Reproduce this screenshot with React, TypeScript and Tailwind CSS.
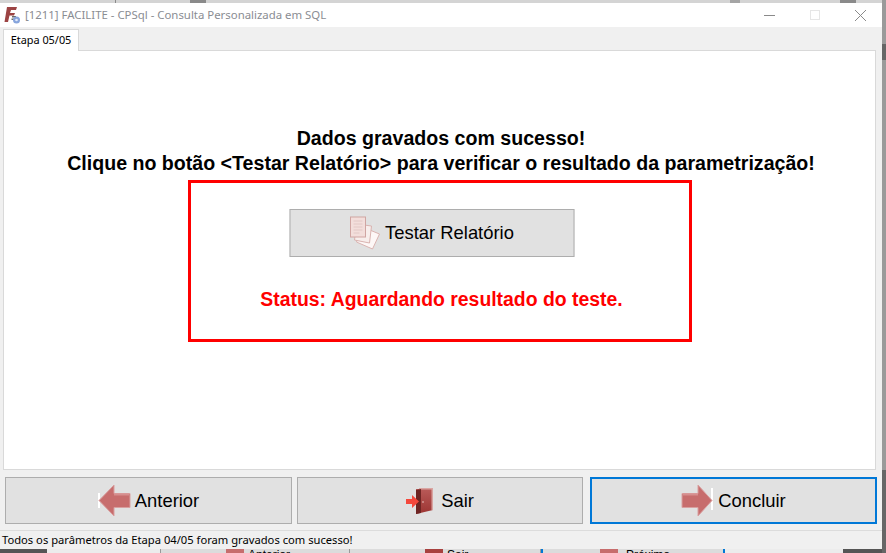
// Etapa 05/05 window of the CPSql report wizard
import type { ReactNode } from 'react';

function AppIcon() {
  return (
    <svg width="18" height="18" viewBox="0 0 18 18">
      <path d="M4 1h10l-1 3H8L7 7h5l-1 2.500H6.500L5 16H1.500z" fill="#9c4343" />
      <path d="M9 10h4v1.500H9zM8.500 12.500h2.500V14H8.500z" fill="#6a6a6a" />
      <circle cx="13.500" cy="14" r="3.500" fill="#86a4dc" />
      <circle cx="13.500" cy="14" r="1.300" fill="#e3ebf9" />
    </svg>
  );
}

function LeftArrow() {
  return (
    <svg width="33" height="33" viewBox="0 0 33 33">
      <path d="M0 9h2v15H0z" fill="#ffffff" />
      <path d="M1 16.500 16 1v8.500h16v14H16V32z" fill="#c76d6d" stroke="#d9a0a0" strokeWidth="1" />
      <path d="M16 9.500h15v2H16z" fill="#d68f8f" />
    </svg>
  );
}

function RightArrow() {
  return (
    <svg width="33" height="33" viewBox="0 0 33 33">
      <path d="M30 4h2v22h-2z" fill="#ffffff" />
      <path d="M31 16.500 17 1v8.500H1v14h16V32z" fill="#c76d6d" stroke="#d9a0a0" strokeWidth="1" />
      <path d="M2 9.500h15v2H2z" fill="#d68f8f" />
    </svg>
  );
}

function DoorIcon() {
  return (
    <svg width="31" height="28" viewBox="0 0 31 28">
      <defs>
        <linearGradient id="door" x1="0" y1="0" x2="0" y2="1">
          <stop offset="0" stopColor="#b95a58" />
          <stop offset="1" stopColor="#9c3432" />
        </linearGradient>
      </defs>
      <path d="M10 2h17v21l-17 4z" fill="url(#door)" />
      <path d="M13 1h14v22h-1.500V2.500H13z" fill="#d9a5a2" />
      <path d="M10 3l5-1v24l-5 1z" fill="#6e2523" />
      <path d="M0 12h6V8l7 6.500-7 6.500v-4H0z" fill="#f4483c" />
      <circle cx="17" cy="15" r="0.800" fill="#f0d0c8" />
    </svg>
  );
}

function DocsIcon() {
  return (
    <svg width="32" height="34" viewBox="0 0 32 34">
      <path d="M13 11l17 7-7 15-16-7z" fill="#fdf7f6" stroke="#d9b3b0" />
      <path d="M7 8l15 2-2 17-15-3z" fill="#f8eeec" stroke="#d9b3b0" />
      <rect x="1" y="1" width="15" height="20" fill="#f3dedb" stroke="#d0a5a2" />
      <path d="M4 5h9M4 8h9M4 11h9M4 14h9M4 17h6" stroke="#e2c8c5" />
    </svg>
  );
}

function NavButton({ icon, label, className }: { icon: ReactNode; label: string; className: string }) {
  return (
    <button
      className={`flex h-[47px] items-center justify-center gap-[4px] bg-[#e1e1e1] text-[18.4px] text-black ${className}`}
    >
      {icon}
      <span>{label}</span>
    </button>
  );
}

export default function App() {
  return (
    <div className="flex h-[553px] w-[886px] overflow-hidden font-['Liberation_Sans',sans-serif]">
      <div className="flex w-[882px] flex-col">
        {/* window behind, top edge */}
        <div className="flex h-[3px] shrink-0 bg-[#d4d4d4]">
          <div className="ml-[115px] w-px bg-[#8a8a8a]" />
          <div className="ml-[74px] w-[16px] bg-[#8a8a8a]" />
          <div className="ml-[524px] w-[10px] bg-[#a5a5a5]" />
          <div className="ml-[100px] w-[16px] bg-[#8a8a8a]" />
        </div>

        {/* title bar */}
        <div className="flex h-[24px] shrink-0 items-center bg-white pl-[3px]">
          <AppIcon />
          <span className="ml-[4px] font-['Noto_Sans',sans-serif] text-[11.4px] text-[#8a8d93]">
            [1211] FACILITE - CPSql - Consulta Personalizada em SQL
          </span>
          <div className="ml-auto flex items-center gap-[35px] pr-[16px]">
            <div className="h-px w-[11px] bg-[#8a8a8a]" />
            <div className="size-[10px] border border-[#e6e6e6]" />
            <svg width="11" height="11" viewBox="0 0 11 11">
              <path d="M0 0l11 11M11 0L0 11" stroke="#8a8a8a" />
            </svg>
          </div>
        </div>

        <div className="flex min-h-0 flex-1 flex-col bg-[#f0f0f0]">
          {/* tab */}
          <div className="-mb-px flex h-[24px] shrink-0 items-end pl-[3px]">
            <div className="relative z-10 flex h-[22px] w-[76px] items-center justify-center border border-b-0 border-[#d9d9d9] bg-white font-['Noto_Sans',sans-serif] text-[10.9px] text-black">
              Etapa 05/05
            </div>
          </div>

          {/* panel */}
          <div className="ml-[3px] flex h-[420px] w-[873px] shrink-0 flex-col items-center border border-[#d9d9d9] bg-white pt-[75px]">
            <p className="pl-[3px] text-center text-[19.6px] font-bold leading-[25px] whitespace-nowrap text-black">
              Dados gravados com sucesso!
              <br />
              Clique no botão &lt;Testar Relatório&gt; para verificar o resultado da parametrização!
            </p>
            <div className="mt-[4px] ml-px flex h-[162px] w-[504px] flex-col items-center border-[3px] border-[#ff0000] pt-[26px]">
              <button className="flex h-[48px] w-[285px] -translate-x-[8.5px] items-center justify-center gap-[4px] border border-[#adadad] bg-[#e1e1e1] text-[18.4px] text-black">
                <DocsIcon />
                <span>Testar Relatório</span>
              </button>
              <p className="mt-[31px] pl-[3px] text-[19.4px] font-bold leading-[22px] whitespace-nowrap text-[#ff0000]">
                Status: Aguardando resultado do teste.
              </p>
            </div>
          </div>

          {/* nav buttons */}
          <div className="mt-[7px] flex pl-[5px]">
            <NavButton icon={<LeftArrow />} label="Anterior" className="w-[287px] border border-[#adadad]" />
            <NavButton icon={<DoorIcon />} label="Sair" className="ml-[5px] w-[286px] border border-[#adadad]" />
            <NavButton icon={<RightArrow />} label="Concluir" className="ml-[7px] w-[287px] border-2 border-[#0078d7]" />
          </div>

          {/* status bar */}
          <div className="mt-[6px] flex min-h-0 flex-1 items-center border-t border-[#dcdcdc] pl-[2px] font-['Noto_Sans',sans-serif] text-[11.2px] text-black">
            Todos os parâmetros da Etapa 04/05 foram gravados com sucesso!
          </div>
        </div>

        {/* window behind, cut off by the bottom of the shot */}
        <div className="flex h-[4px] shrink-0 overflow-hidden text-[12px] leading-[12px] text-black">
          <div className="w-[47px] bg-[#555555]" />
          <div className="w-[113px] bg-[#ececec]" />
          <div className="flex w-[190px] gap-[4px] border-x border-[#999999] bg-[#dcdcdc] pl-[65px]">
            <div className="h-[4px] w-[18px] bg-[#c76d6d]" />
            <span>Anterior</span>
          </div>
          <div className="flex w-[191px] gap-[4px] border-r border-[#999999] bg-[#dcdcdc] pl-[75px]">
            <div className="h-[4px] w-[18px] bg-[#a8413f]" />
            <span>Sair</span>
          </div>
          <div className="flex w-[184px] gap-[8px] border-x-2 border-[#0078d7] bg-[#dcdcdc] pl-[57px]">
            <div className="h-[4px] w-[18px] bg-[#c76d6d]" />
            <span>Próximo</span>
          </div>
          <div className="w-[118px] bg-[#ececec]" />
          <div className="flex-1 bg-[#555555]" />
        </div>
      </div>
      <div className="flex w-[4px] flex-col bg-[#9a9a9a]">
        <div className="mt-[44px] h-[16px] bg-[#666666]" />
        <div className="mt-auto h-[83px] bg-[#666666]" />
      </div>
    </div>
  );
}
